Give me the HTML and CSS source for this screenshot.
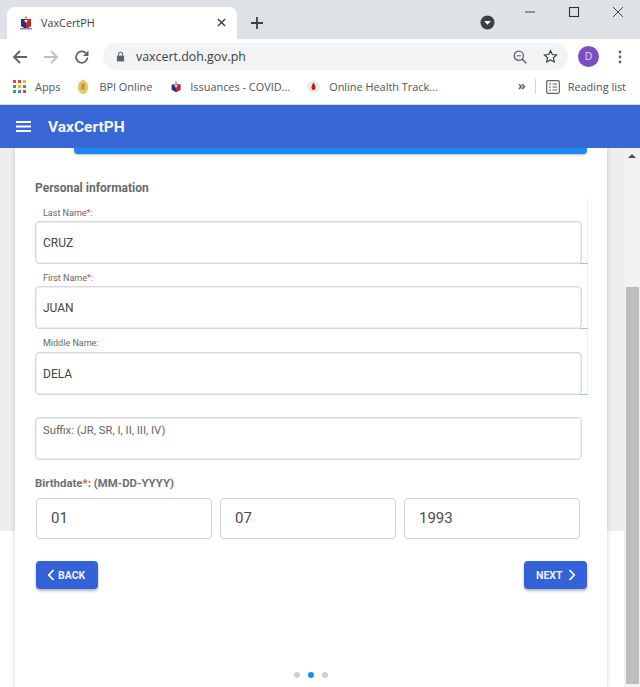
FILE: index.html
```html
<!DOCTYPE html>
<html lang="en">
<head>
<meta charset="utf-8">
<title>VaxCertPH</title>
<link rel="stylesheet" href="styles.css">
</head>
<body>
<div class="window">
  <div class="tabstrip">
    <div class="tab">
      <svg class="favicon" viewBox="0 0 16 16"><path d="M3 4h10v7l-5 3-5-3z" fill="#26337a"/><path d="M8 4h5v7l-5 3z" fill="#c8242f"/><path d="M6 5l2 3 2-3z" fill="#f4f4f4"/><circle cx="8" cy="2.5" r="1.2" fill="#b89a4a"/><path d="M2 13h12v1.500H2z" fill="#8a8f9c"/></svg>
      <span class="tab-title">VaxCertPH</span>
      <svg class="tab-close" viewBox="0 0 10 10"><path d="M1 1l8 8M9 1l-8 8" stroke="#3c4043" stroke-width="1.600"/></svg>
    </div>
    <svg class="newtab" viewBox="0 0 12 12"><path d="M6 0v12M0 6h12" stroke="#3c4043" stroke-width="1.800"/></svg>
    <div class="strip-spacer"></div>
    <svg class="media" viewBox="0 0 16 16"><circle cx="8" cy="8" r="7.500" fill="#3c4043"/><path d="M4.500 6.500h7L8 10.500z" fill="#fff"/></svg>
    <div class="wincontrols">
      <svg viewBox="0 0 12 12"><path d="M1 6h10" stroke="#444" stroke-width="1"/></svg>
      <svg viewBox="0 0 12 12"><rect x="1.500" y="1.500" width="9" height="9" fill="none" stroke="#333" stroke-width="1.100"/></svg>
      <svg viewBox="0 0 12 12"><path d="M1 1l10 10M11 1L1 11" stroke="#444" stroke-width="1"/></svg>
    </div>
  </div>
  <div class="toolbar">
    <svg class="nav nav-first" viewBox="0 0 16 16"><path d="M15 8H2M8 2L2 8l6 6" fill="none" stroke="#5f6368" stroke-width="1.800"/></svg>
    <svg class="nav" viewBox="0 0 16 16"><path d="M1 8h13M8 2l6 6-6 6" fill="none" stroke="#bdc1c6" stroke-width="1.800"/></svg>
    <svg class="nav" viewBox="0 0 16 16"><path d="M13.500 8.500A5.700 5.700 0 1 1 11.800 4" fill="none" stroke="#5f6368" stroke-width="1.800"/><path d="M14.500 1.500v5.500H9z" fill="#5f6368"/></svg>
    <div class="omnibox">
      <svg class="lock" viewBox="0 0 10 12"><path d="M1 5h8v6.500H1z" fill="#5f6368"/><path d="M2.800 5V3.400a2.200 2.200 0 0 1 4.400 0V5" fill="none" stroke="#5f6368" stroke-width="1.200"/></svg>
      <span class="url">vaxcert.doh.gov.ph</span>
      <svg class="zoomout" viewBox="0 0 14 14"><circle cx="5.800" cy="5.800" r="4.600" fill="none" stroke="#5f6368" stroke-width="1.300"/><path d="M9 9l4.300 4.300" stroke="#5f6368" stroke-width="1.500"/><path d="M3.500 5.800h4.600" stroke="#5f6368" stroke-width="1.100"/></svg>
      <svg class="star" viewBox="0 0 16 16"><path d="M8 1.800l1.900 4.100 4.500.5-3.300 3 .9 4.400L8 11.600l-4 2.200.9-4.400-3.300-3 4.500-.5z" fill="none" stroke="#3c4043" stroke-width="1.300"/></svg>
    </div>
    <div class="avatar">D</div>
    <svg class="menu-dots" viewBox="0 0 4 14"><circle cx="2" cy="2" r="1.400" fill="#5f6368"/><circle cx="2" cy="7" r="1.400" fill="#5f6368"/><circle cx="2" cy="12" r="1.400" fill="#5f6368"/></svg>
  </div>
  <div class="bookmarks">
    <svg class="bm-icon apps" viewBox="0 0 13 13">
      <rect x="0" y="0" width="3" height="3" fill="#ea4335"/><rect x="5" y="0" width="3" height="3" fill="#ea4335"/><rect x="10" y="0" width="3" height="3" fill="#fbbc04"/>
      <rect x="0" y="5" width="3" height="3" fill="#34a853"/><rect x="5" y="5" width="3" height="3" fill="#fbbc04"/><rect x="10" y="5" width="3" height="3" fill="#4285f4"/>
      <rect x="0" y="10" width="3" height="3" fill="#34a853"/><rect x="5" y="10" width="3" height="3" fill="#4285f4"/><rect x="10" y="10" width="3" height="3" fill="#ea4335"/>
    </svg>
    <span class="bm-text bm-apps">Apps</span>
    <svg class="bm-icon bpi" viewBox="0 0 12 16"><path d="M6 0l2.200 2.500 2.300 1L11.500 9c0 4-3 7-5.500 7S.5 13 .5 9l1-5.500L3.800 2.500z" fill="#e8c868"/><path d="M4.200 5h3.600v6.500H4.200z" fill="#b8973f"/></svg>
    <span class="bm-text bm-bpi">BPI Online</span>
    <svg class="bm-icon seal" viewBox="0 0 16 16"><path d="M3 5h10v6l-5 3-5-3z" fill="#26337a"/><path d="M8 5h5v6l-5 3z" fill="#c8242f"/><path d="M6 6l2 3 2-3z" fill="#f4f4f4"/><circle cx="8" cy="3" r="1.300" fill="#b89a4a"/></svg>
    <span class="bm-text bm-iss">Issuances - COVID...</span>
    <svg class="bm-icon health" viewBox="0 0 14 14"><circle cx="7" cy="7" r="6" fill="#f3ecec" stroke="#ccc" stroke-width=".6"/><path d="M7 2.500c1.500 3 2.300 4.500 2.300 6a2.300 2.300 0 0 1-4.600 0c0-1.500.8-3 2.300-6z" fill="#b3261e"/></svg>
    <span class="bm-text bm-health">Online Health Track...</span>
    <span class="bm-spacer"></span>
    <span class="chevrons">»</span>
    <span class="bm-divider"></span>
    <svg class="bm-icon reading" viewBox="0 0 14 14"><rect x=".7" y=".7" width="12.600" height="12.600" rx="1.200" fill="none" stroke="#5f6368" stroke-width="1.200"/><path d="M3 4h2M6.500 4H11M3 7h2M6.500 7H11M3 10h2M6.500 10H11" stroke="#5f6368" stroke-width="1.100"/></svg>
    <span class="bm-text">Reading list</span>
  </div>
  <header class="appbar">
    <svg class="hamburger" viewBox="0 0 15 11"><path d="M0 1h15M0 5.500h15M0 10h15" stroke="#fff" stroke-width="1.800"/></svg>
    <span class="app-title">VaxCertPH</span>
  </header>
  <div class="viewport">
    <main class="page">
      <section class="card">
        <div class="blue-strip"></div>
        <h2 class="section-title">Personal information</h2>
        <div class="field field-tall">
          <label class="mini-label">Last Name<span class="req">*</span>:</label>
          <div class="input">CRUZ</div>
        </div>
        <div class="field">
          <label class="mini-label">First Name<span class="req">*</span>:</label>
          <div class="input">JUAN</div>
        </div>
        <div class="field field-tall field-mid">
          <label class="mini-label">Middle Name:</label>
          <div class="input">DELA</div>
        </div>
        <div class="input suffix">Suffix: (JR, SR, I, II, III, IV)</div>
        <div class="birth-label">Birthdate<span class="req">*</span>: (MM-DD-YYYY)</div>
        <div class="date-row">
          <div class="date-box">01</div>
          <div class="date-box">07</div>
          <div class="date-box">1993</div>
        </div>
        <div class="actions">
          <button class="btn btn-back"><svg viewBox="0 0 8 12"><path d="M6.500 1L1.800 6l4.700 5" fill="none" stroke="#fff" stroke-width="1.800"/></svg>BACK</button>
          <button class="btn btn-next">NEXT<svg viewBox="0 0 8 12"><path d="M1.500 1l4.700 5-4.700 5" fill="none" stroke="#fff" stroke-width="1.800"/></svg></button>
        </div>
        <div class="dots"><span class="dot"></span><span class="dot dot-on"></span><span class="dot"></span></div>
      </section>
    </main>
    <aside class="scrollbar">
      <div class="arrow-up"></div>
      <div class="thumb"></div>
    </aside>
  </div>
</div>
</body>
</html>
```
FILE: styles.css
```css
* { box-sizing: border-box; }
html, body { margin: 0; padding: 0; height: 100%; overflow: hidden; }
body { font-family: Roboto, "Liberation Sans", sans-serif; background: #fff; }
svg { display: block; flex: none; }

.window { width: 640px; height: 687px; display: flex; flex-direction: column; }

/* Tab strip */
.tabstrip { height: 39px; background: #dee1e6; display: flex; align-items: flex-end; flex: none; }
.tab { width: 230px; height: 32px; margin-left: 7px; background: #fff; border-radius: 8px 8px 0 0; display: flex; align-items: center; padding-left: 11px; }
.favicon { width: 16px; height: 16px; margin-bottom: 1px; }
.tab-title { margin-left: 7px; font: 10.800px "Open Sans", "Liberation Sans", sans-serif; color: #3c4043; width: 174px; position: relative; top: -1px; }
.tab-close { width: 9px; height: 9px; margin-bottom: 1px; margin-left: 2px; }
.newtab { width: 12px; height: 12px; margin: 0 0 10px 14px; }
.strip-spacer { flex: 1; }
.media { width: 15px; height: 15px; margin: 0 23px 9px 0; }
.wincontrols { align-self: flex-start; display: flex; gap: 32px; padding: 6px 16px 0 0; margin-left: 6px; }
.wincontrols svg { width: 12px; height: 12px; }

/* Toolbar */
.toolbar { height: 35px; background: #fff; display: flex; align-items: center; flex: none; }
.nav { width: 16px; height: 16px; margin-left: 15px; }
.nav-first { margin-left: 12px; }
.omnibox { width: 465px; height: 27px; margin-left: 13px; background: #f1f3f4; border-radius: 14px; display: flex; align-items: center; padding-left: 13px; }
.lock { width: 9px; height: 11px; }
.url { margin-left: 11px; font: 12.400px "Open Sans", "Liberation Sans", sans-serif; color: #3c4043; width: 375px; }
.zoomout { width: 14px; height: 14px; margin-left: 2px; }
.star { width: 15px; height: 15px; margin-left: 16px; }
.avatar { width: 21px; height: 21px; margin-left: 10px; border-radius: 50%; background: #7a4fc4; color: #e8dcf8; font: 10.500px/21px "Open Sans", sans-serif; text-align: center; }
.menu-dots { width: 4px; height: 14px; margin-left: 19px; }

/* Bookmarks */
.bookmarks { height: 31px; background: #fff; display: flex; align-items: center; padding: 0 14px 5px 13px; flex: none; border-bottom: 1px solid #d7dbe2; }
.bm-icon { width: 13px; height: 13px; }
.bm-text { font: 10.900px "Open Sans", "Liberation Sans", sans-serif; color: #50545a; white-space: nowrap; }
.bm-apps { margin-left: 9px; }
.bpi { width: 12px; height: 15px; margin-left: 17px; }
.bm-bpi { margin-left: 10px; }
.seal { width: 14px; height: 14px; margin-left: 17px; }
.bm-iss { margin-left: 7px; }
.health { margin-left: 17px; }
.bm-health { margin-left: 9px; }
.bm-spacer { flex: 1; }
.chevrons { font: bold 13px/13px "Open Sans", sans-serif; color: #666; margin-right: 9px; position: relative; top: -1px; }
.bm-divider { width: 1px; height: 15px; background: #d3d5d8; margin-right: 10px; }
.reading { width: 14px; height: 14px; margin-right: 8px; }

/* App bar */
.appbar { height: 43px; background: #3a67d6; display: flex; align-items: center; padding-left: 16px; flex: none; position: relative; z-index: 2; }
.hamburger { width: 15px; height: 11px; }
.app-title { margin-left: 17px; font-size: 15.500px; font-weight: 700; color: #f2f5fd; }

/* Page */
.viewport { flex: 1; display: flex; min-height: 0; }
.page { width: 624px; background: linear-gradient(#eeeeee 0, #eeeeee 383px, #ffffff 383px); padding: 0 17px 0 15px; }
.card { height: 100%; background: #fff; box-shadow: 0 0 5px rgba(0, 0, 0, .18); padding-left: 20px; display: flex; flex-direction: column; }

.blue-strip { width: 513px; height: 6px; margin-left: 39px; background: #1e88f5; border-radius: 0 0 4px 4px; box-shadow: 0 1px 2px rgba(0, 0, 0, .25); flex: none; }
.section-title { margin: 27px 0 0; font-size: 12px; line-height: 14px; font-weight: 700; color: #6a6a6a; }

.field { width: 553px; height: 65px; flex: none; border-right: 1px solid #f0f0f0; position: relative; display: flex; flex-direction: column; justify-content: flex-end; }
.field-tall { height: 66px; }
.section-title + .field { margin-top: 3px; }
.field::after { content: ""; position: absolute; right: -1px; bottom: 0; width: 8px; height: 1px; background: #8fdc9e; }
.mini-label { height: 10px; margin-bottom: 3px; padding-left: 8px; font-size: 9px; line-height: 10px; color: #666; flex: none; }
.field-mid .mini-label { margin-bottom: 4px; }
.req { color: #f0414e; }
.input { width: 547px; height: 43px; flex: none; background: #fff; border: 1px solid #d6d9d9; box-shadow: inset 0 0 0 1px #eff0f0; border-radius: 4px; font-size: 12px; color: #444; padding-left: 7px; line-height: 43px; }
.suffix { margin-top: 22px; color: #666; line-height: 14px; padding-top: 6px; font-size: 11.300px; }

.birth-label { margin-top: 16px; font-size: 11.400px; line-height: 14px; font-weight: 700; color: #6f6f6f; }
.date-row { display: flex; gap: 8px; margin: 8px 0 0 1px; }
.date-box { width: 176px; height: 41px; border: 1px solid #d2d2d2; border-radius: 4px; font-size: 15px; line-height: 39px; padding-left: 14px; color: #4a4a4a; }

.actions { display: flex; justify-content: space-between; width: 551px; margin: 22px 0 0 1px; }
.btn { height: 28px; border: 0; border-radius: 4px; background: #3462d8; color: #eef2fd; font: 700 10.500px Roboto, sans-serif; display: flex; align-items: center; box-shadow: 0 2px 3px rgba(0, 0, 0, .28); padding: 0; }
.btn svg { width: 8px; height: 12px; }
.btn-back { width: 62px; padding-left: 11px; gap: 3px; }
.btn-next { width: 63px; padding-left: 12px; gap: 5px; }

.dots { display: flex; gap: 8px; margin: 83px 0 0 259px; align-items: center; }
.dot { width: 6px; height: 6px; border-radius: 50%; background: #cfcfcf; }
.dot-on { background: #1e88f5; }

/* Scrollbar */
.scrollbar { width: 16px; background: #f1f1f1; display: flex; flex-direction: column; align-items: center; padding-top: 6px; }
.arrow-up { width: 0; height: 0; border-left: 4px solid transparent; border-right: 4px solid transparent; border-bottom: 4px solid #505050; }
.thumb { width: 13px; height: 397px; margin-top: 129px; background: #bdbdbd; }
```
